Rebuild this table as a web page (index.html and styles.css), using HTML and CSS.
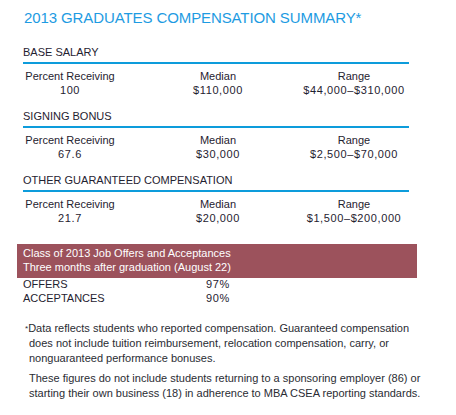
FILE: index.html
```html
<!DOCTYPE html>
<html lang="en">
<head>
    <meta charset="UTF-8">
    <title>2013 Graduates Compensation Summary</title>
    <link rel="stylesheet" href="styles.css">
</head>
<body>
    <div class="page">
        <h1 class="title">2013 GRADUATES COMPENSATION SUMMARY*</h1>

        <!-- Compensation sections -->
        <div class="comp">
            <h2>BASE SALARY</h2>
            <div class="comp-row">
                <div class="col col-pct">Percent Receiving<br><span class="num">100</span></div>
                <div class="col col-med">Median<br><span class="num">$110,000</span></div>
                <div class="col col-rng">Range<br><span class="num">$44,000–$310,000</span></div>
            </div>
        </div>

        <div class="comp">
            <h2>SIGNING BONUS</h2>
            <div class="comp-row">
                <div class="col col-pct">Percent Receiving<br><span class="num">67.6</span></div>
                <div class="col col-med">Median<br><span class="num">$30,000</span></div>
                <div class="col col-rng">Range<br><span class="num">$2,500–$70,000</span></div>
            </div>
        </div>

        <div class="comp">
            <h2>OTHER GUARANTEED COMPENSATION</h2>
            <div class="comp-row">
                <div class="col col-pct">Percent Receiving<br><span class="num">21.7</span></div>
                <div class="col col-med">Median<br><span class="num">$20,000</span></div>
                <div class="col col-rng">Range<br><span class="num">$1,500–$200,000</span></div>
            </div>
        </div>

        <!-- Offers box -->
        <div class="offers-head">
            Class of 2013 Job Offers and Acceptances<br>
            Three months after graduation (August 22)
        </div>
        <div class="offers">
            <span>OFFERS</span><span class="num">97%</span>
            <span>ACCEPTANCES</span><span class="num">90%</span>
        </div>

        <div class="notes">
            <p><span class="star">*</span>Data reflects students who reported compensation. Guaranteed compensation does not include tuition reimbursement, relocation compensation, carry, or nonguaranteed performance bonuses.</p>
            <p>These figures do not include students returning to a sponsoring employer (86) or starting their own business (18) in adherence to MBA CSEA reporting standards.</p>
        </div>
    </div>
</body>
</html>
```

FILE: styles.css
```css
* {
    margin: 0;
    padding: 0;
    box-sizing: border-box;
}

body {
    font-family: 'Liberation Sans', Arial, sans-serif;
    background: #fff;
    color: #1f2230;
}

.page {
    width: 456px;
    padding-top: 9px;
}

.title {
    margin-left: 24px;
    font-size: 15px;
    line-height: 17px;
    font-weight: normal;
    color: #1d9be2;
    letter-spacing: -0.1px;
    margin-bottom: 20px;
}

.comp {
    margin-left: 23px;
    width: 386px;
    margin-bottom: 13px;
}

.comp h2 {
    font-size: 11px;
    line-height: 13px;
    font-weight: normal;
    padding-bottom: 3px;
    border-bottom: 2px solid #0d9cdb;
    margin-bottom: 5px;
}

.comp-row {
    display: grid;
    grid-template-columns: 94px 1fr 110px;
    font-size: 11px;
    line-height: 14px;
}

.col {
    text-align: center;
}

.col-med {
    padding-left: 20px;
}

.num {
    letter-spacing: 0.6px;
}

.offers-head {
    margin-top: 19px;
    margin-left: 17px;
    width: 400px;
    background: #9c525c;
    color: #fff;
    font-size: 11px;
    line-height: 13.5px;
    padding: 3px 6px 4px;
}

.offers {
    display: grid;
    grid-template-columns: 183px 1fr;
    margin-left: 23px;
    font-size: 11px;
    line-height: 13.5px;
}

.notes {
    margin: 16px 0 0 29px;
    width: 402px;
    font-size: 11px;
    line-height: 15px;
    color: #2a2c33;
}

.notes p {
    margin-bottom: 5px;
}

.star {
    margin-left: -4px;
    font-size: 8px;
    vertical-align: top;
}
```
